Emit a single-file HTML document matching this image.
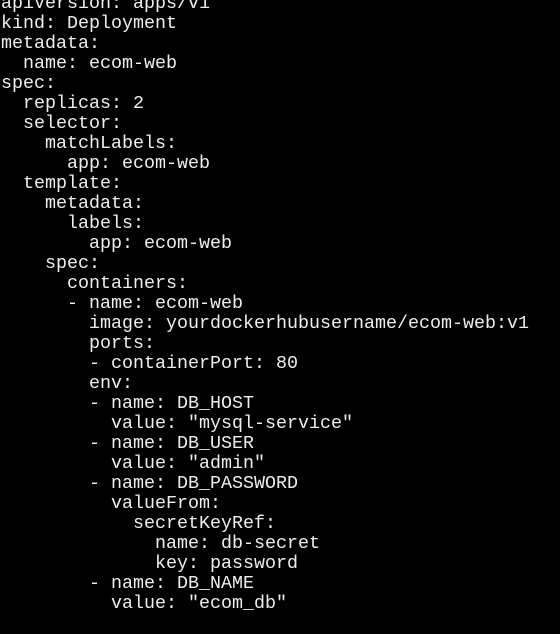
<!DOCTYPE html>
<html><head><style>
html,body{margin:0;padding:0;background:#000;width:560px;height:634px;overflow:hidden}
pre{position:absolute;left:1px;top:-6px;margin:0;font-family:"Liberation Mono",monospace;font-size:18.33px;line-height:20px;color:#eeeeee}
</style></head><body>
<pre>apiVersion: apps/v1
kind: Deployment
metadata:
  name: ecom-web
spec:
  replicas: 2
  selector:
    matchLabels:
      app: ecom-web
  template:
    metadata:
      labels:
        app: ecom-web
    spec:
      containers:
      - name: ecom-web
        image: yourdockerhubusername/ecom-web:v1
        ports:
        - containerPort: 80
        env:
        - name: DB_HOST
          value: "mysql-service"
        - name: DB_USER
          value: "admin"
        - name: DB_PASSWORD
          valueFrom:
            secretKeyRef:
              name: db-secret
              key: password
        - name: DB_NAME
          value: "ecom_db"</pre>
</body></html>
